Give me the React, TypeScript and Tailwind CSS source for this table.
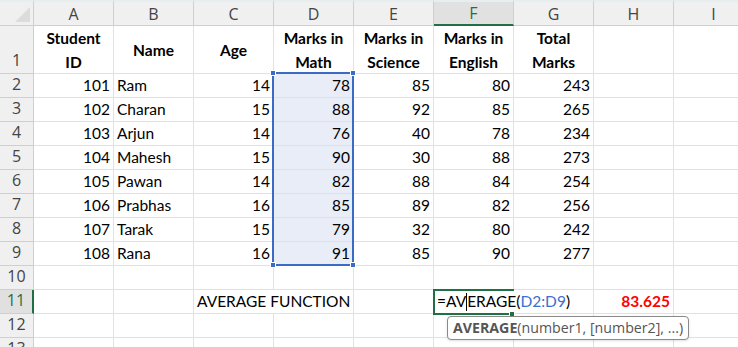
import React from "react";

const cols = ["A", "B", "C", "D", "E", "F", "G", "H", "I"];
const data: (string | number)[][] = [
  [101, "Ram", 14, 78, 85, 80, 243],
  [102, "Charan", 15, 88, 92, 85, 265],
  [103, "Arjun", 14, 76, 40, 78, 234],
  [104, "Mahesh", 15, 90, 30, 88, 273],
  [105, "Pawan", 14, 82, 88, 84, 254],
  [106, "Prabhas", 16, 85, 89, 82, 256],
  [107, "Tarak", 15, 79, 32, 80, 242],
  [108, "Rana", 16, 91, 85, 90, 277],
];

const cell = "border-r border-b border-[#e1e1e1] h-full overflow-visible whitespace-nowrap";
const hdr = "bg-[#f0f0f0] border-r border-b border-[#cfcfcf] flex items-center justify-center text-[#444]";
const rowHdr = "bg-[#f0f0f0] border-r border-b border-[#cfcfcf] flex items-end justify-center text-[#444] pb-[1px]";

function RowHead({ n, active }: { n: number; active?: boolean }) {
  return (
    <div
      className={
        active
          ? "bg-[#e0e0e0] border-r-2 border-r-[#1f7145] border-b border-b-[#cfcfcf] flex items-end justify-center text-[#1f7145] pb-[1px]"
          : rowHdr
      }
      style={{ fontFamily: "'Open Sans', 'Noto Sans', sans-serif", fontSize: 16 }}
    >
      {n}
    </div>
  );
}

export default function App() {
  const font = { fontFamily: "Lato, 'Liberation Sans', sans-serif", fontSize: 15.5 } as React.CSSProperties;
  return (
    <div className="w-[738px] h-[347px] overflow-hidden bg-white relative" style={font}>
      <div
        className="grid text-black"
        style={{
          gridTemplateColumns: "34px repeat(8, 80px) 80px",
          gridTemplateRows: "26px 48px repeat(12, 24px)",
        }}
      >
        {/* corner */}
        <div className="bg-[#f0f0f0] border-t-2 border-t-[#e8edf0] border-r border-b border-[#cfcfcf] relative">
          <svg className="absolute right-[3px] bottom-[3px]" width="15" height="15" viewBox="0 0 15 15">
            <polygon points="15,0 15,15 0,15" fill="#dcdcdc" />
          </svg>
        </div>
        {cols.map((c) =>
          c === "F" ? (
            <div
              key={c}
              className="bg-[#e1e1e1] border-t-2 border-t-[#e8edf0] border-r border-r-[#cfcfcf] border-b-2 border-b-[#1f7145] flex items-center justify-center text-[#1f7145]"
              style={{ fontFamily: "'Open Sans', 'Noto Sans', sans-serif", fontSize: 16 }}
            >
              {c}
            </div>
          ) : (
            <div
              key={c}
              className={hdr + " border-t-2 border-t-[#e8edf0]"}
              style={{ fontFamily: "'Open Sans', 'Noto Sans', sans-serif", fontSize: 16 }}
            >
              {c}
            </div>
          )
        )}

        {/* row 1 */}
        <RowHead n={1} />
        {[
          ["Student", "ID"],
          ["Name"],
          ["Age"],
          ["Marks in", "Math"],
          ["Marks in", "Science"],
          ["Marks in", "English"],
          ["Total", "Marks"],
        ].map((lines, i) => (
          <div
            key={i}
            className={cell + " flex flex-col items-center justify-center font-bold leading-[24px]"}
          >
            {lines.map((l) => (
              <span key={l}>{l}</span>
            ))}
          </div>
        ))}
        <div className={cell} />
        <div className={cell} />

        {data.map((r, ri) => (
          <React.Fragment key={ri}>
            <RowHead n={ri + 2} />
            {r.map((v, ci) => (
              <div
                key={ci}
                className={
                  cell +
                  " flex items-center px-[3px] leading-none " +
                  (ci === 1 ? "justify-start" : "justify-end") +
                  (ci === 3 ? " bg-[#e8edf7]" : "")
                }
              >
                {v}
              </div>
            ))}
            <div className={cell} />
            <div className={cell} />
          </React.Fragment>
        ))}

        {/* row 10 */}
        <RowHead n={10} />
        {cols.map((c) => (
          <div key={c} className={cell} />
        ))}

        {/* row 11 */}
        <RowHead n={11} active />
        <div className={cell} />
        <div className={cell} />
        <div className={"col-span-2 border-r border-b border-[#e1e1e1] flex items-center px-[3px] whitespace-nowrap"}>
          AVERAGE FUNCTION
        </div>
        <div className={cell} />
        <div className="col-span-2 border-r border-b border-[#e1e1e1] relative flex items-center whitespace-nowrap">
          <div className="absolute left-[-1px] top-[-1px] w-[81px] h-[26px] border-2 border-r-0 border-[#1f7145]" />
          <div className="absolute left-[75px] top-[21px] w-[6px] h-[6px] bg-[#1f7145] border border-white" />
          <span className="relative pl-[3px]">
            =AV<span className="inline-block w-[1px] h-[18px] bg-black align-middle -mt-[2px]" />ERAGE(
            <span className="text-[#3b6fd4]">D2:D9</span>)
          </span>
        </div>
        <div className={cell + " flex items-center justify-end px-[3px] font-bold text-[#ff0000]"}>83.625</div>
        <div className={cell} />

        {/* row 12 */}
        <RowHead n={12} />
        {cols.map((c) => (
          <div key={c} className={cell} />
        ))}
        {/* row 13 */}
        <RowHead n={13} />
        {cols.map((c) => (
          <div key={c} className={cell} />
        ))}
      </div>

      {/* selection D2:D9 */}
      <div className="absolute left-[272px] top-[72px] w-[82px] h-[194px] border-2 border-[#3a6cc6] pointer-events-none" />
      {[
        [270, 70],
        [350, 70],
        [270, 262],
        [350, 262],
      ].map(([x, y], i) => (
        <div
          key={i}
          className="absolute w-[6px] h-[6px] bg-[#3a6cc6] border border-white"
          style={{ left: x, top: y }}
        />
      ))}

      {/* tooltip */}
      <div
        className="absolute left-[447px] top-[316px] h-[24px] px-[5px] flex items-center bg-white border border-[#8a8a8a] rounded-[4px] text-[#555] shadow-sm"
        style={{ fontFamily: "'Open Sans', 'Noto Sans', sans-serif", fontSize: 14.2 }}
      >
        <span className="font-bold">AVERAGE</span>(number1, [number2], ...)
      </div>
    </div>
  );
}
